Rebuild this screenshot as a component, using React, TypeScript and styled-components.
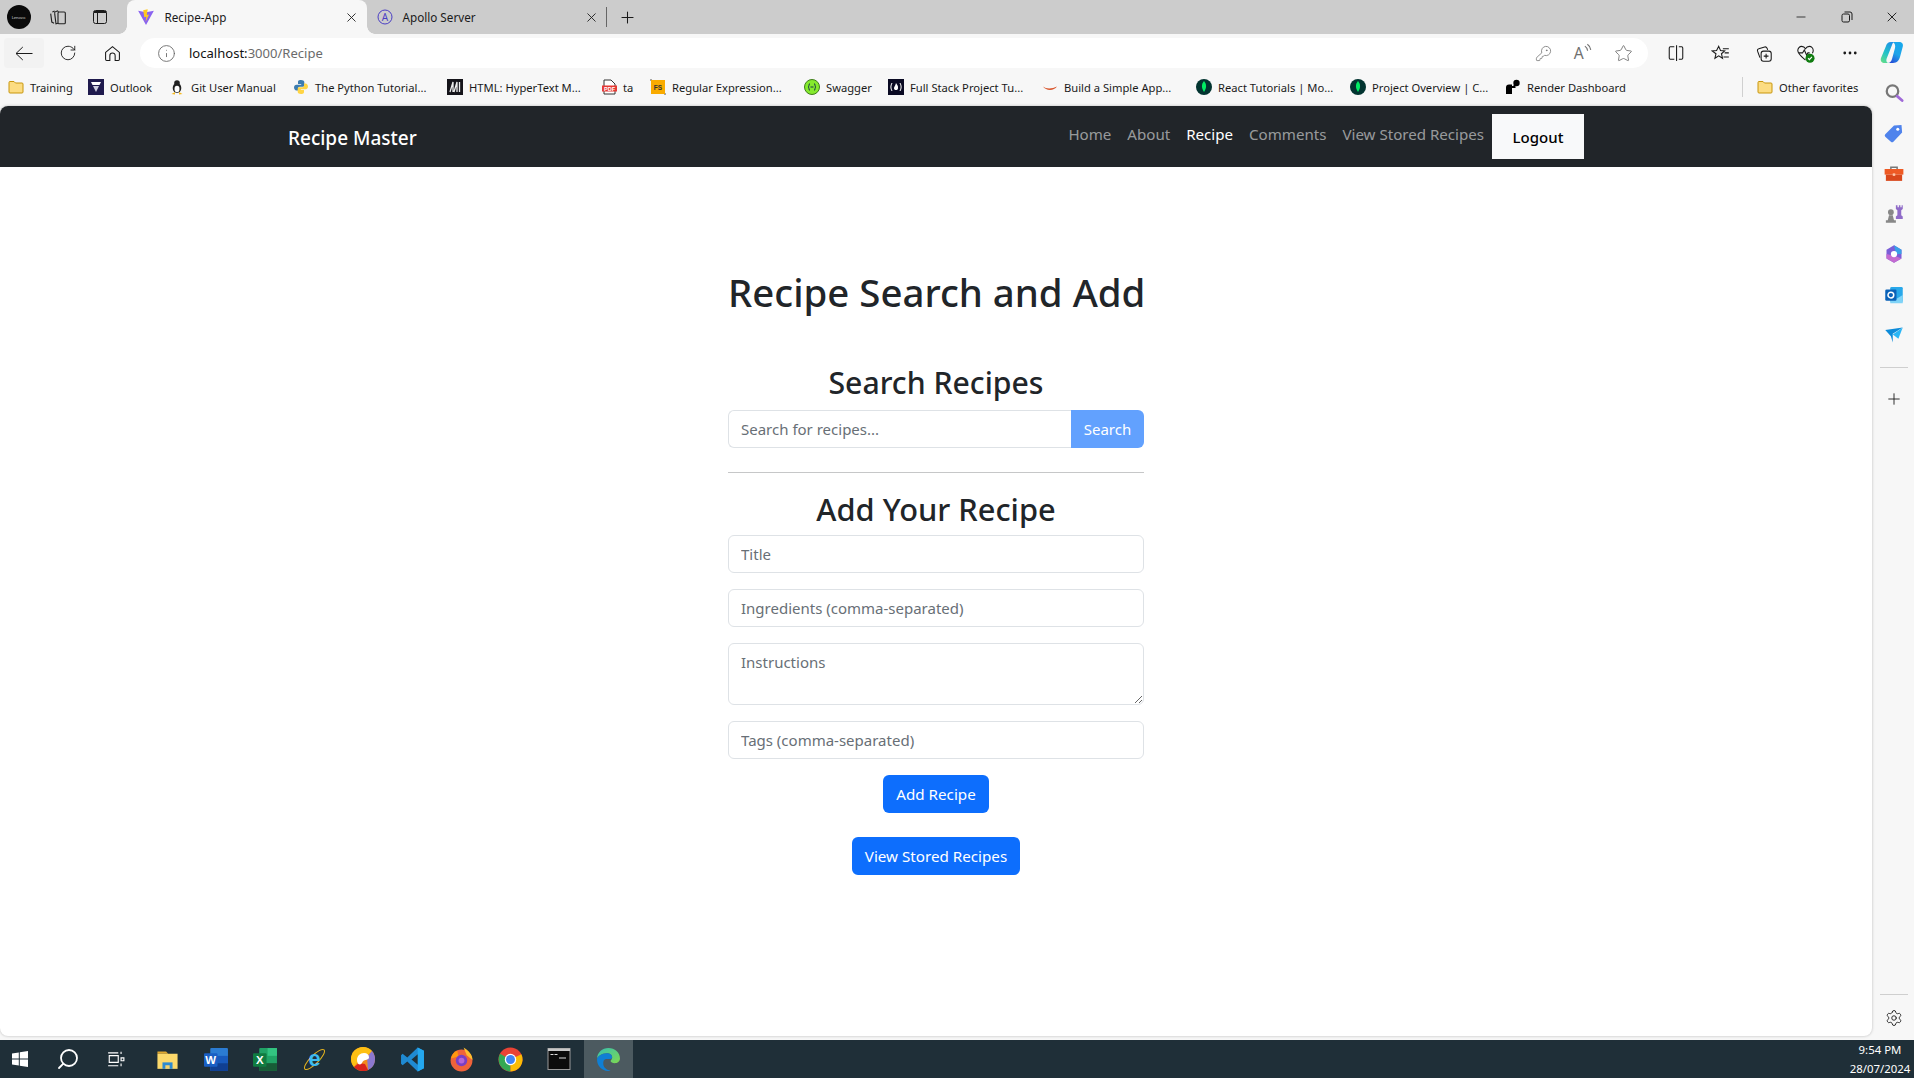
import React from "react";
import styled, { createGlobalStyle } from "styled-components";
import { RotateCw, Info, KeyRound, Star, X, Plus, Minus, MoreHorizontal, Settings, Search as SearchIcon } from "lucide-react";

const Global = createGlobalStyle`
  html, body { margin: 0; padding: 0; height: 100%; overflow: hidden; }
  * { box-sizing: border-box; }
  body { font-family: "Noto Sans", "Open Sans", "Liberation Sans", sans-serif; color: #212529; }
`;

const Screen = styled.div`
  width: 1914px; height: 1078px; display: flex; flex-direction: column; background: #f7f7f7;
`;

/* ---------- tab strip ---------- */
const TabStrip = styled.div`
  height: 34px; flex: none; background: #ccc; display: flex; align-items: stretch; color: #1a1a1a;
`;
const StripButton = styled.div<{ $w: number }>`
  width: ${p => p.$w}px; flex: none; display: flex; align-items: center; justify-content: center;
`;
const ProfileDot = styled.div`
  width: 24px; height: 24px; border-radius: 50%; background: #0a0a0a; flex: none; color: #ddd; font-size: 4px;
  display: flex; align-items: center; justify-content: center;
`;
const Tab = styled.div<{ $active?: boolean }>`
  position: relative; width: 240px; flex: none; display: flex; align-items: center; padding: 0 8px 0 10px; gap: 9.5px;
  font-size: 11.7px; white-space: nowrap;
  background: ${p => (p.$active ? "#f7f7f7" : "transparent")};
  border-radius: ${p => (p.$active ? "8px 8px 0 0" : "0")};
  ${p => p.$active ? `
    &::before, &::after { content: ""; position: absolute; bottom: 0; width: 8px; height: 8px; }
    &::before { left: -8px; background: radial-gradient(circle at 0 0, #ccc 7.5px, #f7f7f7 8px); }
    &::after { right: -8px; background: radial-gradient(circle at 100% 0, #ccc 7.5px, #f7f7f7 8px); }
  ` : ""}
`;
const TabTitle = styled.span` flex: 1; `;
const TabSep = styled.div` width: 1px; height: 20px; background: #666; align-self: center; margin: 0 0 0 -1px; `;
const StripSpacer = styled.div` flex: 1; `;

/* ---------- toolbar ---------- */
const Toolbar = styled.div`
  height: 34px; flex: none; display: flex; align-items: flex-end; background: #f7f7f7;
`;
const ToolSlot = styled.div<{ $w: number; $hover?: boolean }>`
  width: ${p => p.$w}px; height: 30px; flex: none; display: flex; align-items: center; justify-content: center; color: #1a1a1a;
  background: ${p => (p.$hover ? "#f2f2f2" : "transparent")}; border-radius: 4px;
`;
const AddressBar = styled.div`
  width: 1508px; height: 30px; flex: none; background: #fff; border-radius: 15px; display: flex; align-items: center;
  padding-left: 17px; font-size: 13.05px; white-space: nowrap;
`;
const UrlHost = styled.span` color: #111; margin-left: 13px; `;
const UrlPath = styled.span` color: #6b6b6b; flex: 1; `;
const AddressIcons = styled.div`
  display: flex; align-items: center; color: #707070; padding-right: 5px;
`;
const AddressIcon = styled.div`
  width: 40px; display: flex; justify-content: center; align-items: center;
`;

/* ---------- body ---------- */
const Body = styled.div` flex: 1; min-height: 0; display: flex; `;
const Left = styled.div` width: 1872px; flex: none; display: flex; flex-direction: column; padding-bottom: 4px; `;
const Bookmarks = styled.div`
  height: 38px; flex: none; display: flex; align-items: center; padding-left: 8px; font-size: 11.2px; color: #1a1a1a; white-space: nowrap;
`;
const Bookmark = styled.div<{ $w: number }>`
  width: ${p => p.$w}px; flex: none; display: flex; align-items: center; gap: 6px;
`;
const BookmarkDivider = styled.div` width: 1px; height: 20px; background: #d0d0d0; margin-right: 14px; flex: none; `;
const BmIcon = styled.span`
  width: 16px; height: 16px; flex: none; display: flex; align-items: center; justify-content: center;
`;

const Page = styled.div`
  flex: 1; min-height: 0; background: #fff; display: flex; flex-direction: column; border-radius: 8px;
  box-shadow: 0 0 3px rgba(0,0,0,.25);
`;
const Navbar = styled.nav`
  height: 61px; flex: none; background: #212529; border-radius: 8px 8px 0 0; padding: 0 288px;
  display: flex; align-items: center; justify-content: space-between;
`;
const Brand = styled.div` color: #fff; font-size: 19px; font-weight: 500; margin-top: 2px; white-space: nowrap; `;
const NavLinks = styled.div` display: flex; align-items: center; `;
const NavLink = styled.a<{ $active?: boolean }>`
  color: ${p => (p.$active ? "#fff" : "rgba(255,255,255,.55)")}; font-size: 15.1px; padding: 0 8px; margin-bottom: 5px; white-space: nowrap;
`;
const LogoutButton = styled.button`
  width: 92px; height: 45px; border: 0; background: #f8f9fa; color: #000; font: 500 15px "Noto Sans", sans-serif;
`;
const Content = styled.main`
  width: 416px; margin: 0 auto; padding-top: 101px; display: flex; flex-direction: column; align-items: stretch;
`;
const Title = styled.h1`
  margin: 0 0 48px; font-size: 38.4px; line-height: 48px; font-weight: 500; text-align: center; white-space: nowrap; color: #212529;
`;
const Heading = styled.h2<{ $mb: number; $size: number }>`
  margin: 0 0 ${p => p.$mb}px; font-size: ${p => p.$size}px; line-height: 38px; font-weight: 500; text-align: center; white-space: nowrap; color: #212529;
`;
const SearchRow = styled.div` display: flex; height: 38px; `;
const fieldCss = `
  border: 1px solid #dee2e6; background: #fff; font: 400 15px/24px "Noto Sans", sans-serif; color: #212529; padding: 6px 12px; outline: none;
  &::placeholder { color: #686f76; opacity: 1; }
`;
const SearchInput = styled.input`
  ${fieldCss}
  flex: 1; min-width: 0; border-radius: 6px 0 0 6px; border-right: 0;
`;
const SearchButton = styled.button`
  width: 73px; flex: none; border: 0; background: #62a1fe; color: #fff; font: 400 15px "Noto Sans", sans-serif; border-radius: 0 6px 6px 0; padding: 0;
`;
const Rule = styled.hr` width: 100%; border: 0; border-top: 1px solid #c6c7c8; margin: 24px 0 17px; `;
const Field = styled.input`
  ${fieldCss}
  display: block; width: 100%; height: 38px; border-radius: 6px; margin-bottom: 16px;
`;
const TextArea = styled.textarea`
  ${fieldCss}
  display: block; width: 100%; height: 62px; border-radius: 6px; margin-bottom: 16px;
`;
const PrimaryButton = styled.button<{ $w: number; $mb?: number }>`
  width: ${p => p.$w}px; height: 38px; align-self: center; border: 0; border-radius: 6px; background: #0d6efd; color: #fff; padding: 0;
  font: 400 15.2px "Noto Sans", sans-serif; white-space: nowrap; margin-bottom: ${p => p.$mb ?? 0}px;
`;

/* ---------- sidebar ---------- */
const Sidebar = styled.aside`
  flex: 1; display: flex; flex-direction: column; align-items: center; padding: 5px 0 0 1px; color: #1a1a1a;
`;
const SideSlot = styled.div`
  width: 100%; height: 40.3px; flex: none; display: flex; align-items: center; justify-content: center;
`;
const SideRule = styled.div` width: 28px; height: 1px; background: #cfcfcf; flex: none; margin: 12px 0 11px; `;
const SideSpacer = styled.div` flex: 1; `;
const SideRuleBottom = styled(SideRule)` margin: 0 0 3px; `;
const SideFooter = styled.div` height: 40px; flex: none; display: flex; align-items: center; justify-content: center; margin-bottom: 2px; `;

/* ---------- taskbar ---------- */
const Taskbar = styled.footer`
  height: 38px; flex: none; background: #1f2f38; display: flex; align-items: stretch; color: #fff;
`;
const TaskSlot = styled.div<{ $w?: number; $active?: boolean }>`
  width: ${p => p.$w ?? 49}px; flex: none; display: flex; align-items: center; justify-content: center;
  background: ${p => (p.$active ? "#4c5a60" : "transparent")};
`;
const TaskApps = styled.div` display: flex; margin-left: 6.5px; `;
const TaskSpacer = styled.div` flex: 1; `;
const Clock = styled.div`
  width: 62px; margin-right: 3px; text-align: center; font-size: 11.4px; line-height: 19px; white-space: nowrap;
`;
const MirroredSearch = styled(SearchIcon)` transform: scaleX(-1); `;

/* ---------- drawn icons ---------- */
const Svg: React.FC<{ s?: number; children: React.ReactNode }> = ({ s = 16, children }) => (
  <svg width={s} height={s} viewBox="0 0 16 16" fill="none">{children}</svg>
);
const Folder = () => (
  <Svg><path d="M1 3.500A1 1 0 0 1 2 2.500h4l1.500 1.500H14a1 1 0 0 1 1 1v8a1 1 0 0 1-1 1H2a1 1 0 0 1-1-1z" fill="#fcdc82" stroke="#c8960c" /></Svg>
);
const ViteLogo = () => (
  <Svg s={18}><path d="M1 2.500l7 1.300 7-1.300-7 12.500z" fill="#8a63f0" /><path d="M5.500 2l4-.8-.8 5 2-.5-3 6.500.6-4.500-1.800.5z" fill="#ffc91f" /></Svg>
);
const ApolloLogo = () => (
  <svg width="16" height="16" viewBox="0 0 16 16" fill="none">
    <circle cx="8" cy="8" r="7" stroke="#4b3fc4" strokeWidth="1" />
    <text x="8" y="11.500" textAnchor="middle" fontSize="10" fill="#4b3fc4" fontFamily="Noto Sans">A</text>
  </svg>
);
const Tabs2 = () => (
  <Svg s={18}><path d="M3 3.500l2-.8M1.500 5l1 7.500 2 1" stroke="#222" /><path d="M4.500 4l3-1.500 1 1M5 4.500l1.200 9.500 1.800-.5" stroke="#222" /><rect x="8" y="3.500" width="6.500" height="10.500" rx="1" stroke="#222" /></Svg>
);
const PanelIcon = () => (
  <Svg><rect x="1.500" y="1.500" width="13" height="13" rx="2" stroke="#1a1a1a" /><path d="M2 3h12" stroke="#1a1a1a" strokeWidth="2" /><path d="M5.500 3v11" stroke="#1a1a1a" /></Svg>
);
const RestoreIcon = () => (
  <svg width="12" height="12" viewBox="0 0 12 12" fill="none"><rect x="1" y="3" width="7.500" height="8" rx="1.500" stroke="#1a1a1a" /><path d="M3.500 1H9a2 2 0 0 1 2 2v6" stroke="#1a1a1a" /></svg>
);
const BackArrow = () => (
  <svg width="18" height="15" viewBox="0 0 18 15" fill="none"><path d="M1 7.500h16.500M7.800 1L1 7.500 7.800 14" stroke="#1a1a1a" /></svg>
);
const HomeIcon = () => (
  <svg width="17" height="17" viewBox="0 0 16 16" fill="none"><path d="M1.500 7L8 1.500 14.500 7v6.500a1 1 0 0 1-1 1H10.500V10a2.500 2.500 0 0 0-5 0v4.500h-3a1 1 0 0 1-1-1z" stroke="#1a1a1a" /></svg>
);
const Outlook = () => <Svg><rect width="16" height="16" fill="#1f1a4d" /><path d="M3 3h10l-1.500 3h-7z" fill="#fff" /><path d="M5 7h6l-3 6z" fill="#cfcfe0" /></Svg>;
const Tux = () => <Svg><ellipse cx="8" cy="9" rx="4.300" ry="5" fill="#222" /><circle cx="8" cy="4" r="2.800" fill="#222" /><ellipse cx="8" cy="10" rx="2.500" ry="3.300" fill="#fff" /><path d="M2.500 15l3.500-2v2.500zM13.500 15l-3.500-2v2.500z" fill="#f5b81e" /></Svg>;
const PythonLogo = () => <Svg><path d="M8 1C5 1 5 2.500 5 3v2h3.200v.7H3.500C2 5.700 1 7 1 8.500s1 3 2.500 3H5V9.500c0-1 .8-1.800 1.800-1.800h3c1 0 1.500-.7 1.500-1.500V3c0-1.200-1.500-2-3.300-2z" fill="#3d7cb0" /><path d="M8 15c3 0 3-1.500 3-2v-2H7.800v-.7h4.700c1.500 0 2.500-1.300 2.500-2.800s-1-3-2.500-3H11v2c0 1-.8 1.800-1.800 1.800h-3c-1 0-1.500.7-1.500 1.500V13c0 1.200 1.500 2 3.300 2z" fill="#ffd545" /></Svg>;
const Mdn = () => <Svg><rect width="16" height="16" fill="#15141a" /><path d="M3 13L6 3v10M7 13L10 3v10M12.500 3v10" stroke="#eee" strokeWidth="1.300" /></Svg>;
const Pdf = () => (
  <svg width="15" height="16" viewBox="0 0 15 16" fill="none">
    <path d="M2 1h7l4 4v10H2z" fill="#fff" stroke="#333" />
    <rect x="0" y="6.500" width="15" height="6" fill="#e53935" />
    <text x="7.500" y="11.500" textAnchor="middle" fontSize="5.500" fontWeight="700" fill="#fff" fontFamily="Liberation Sans">PDF</text>
  </svg>
);
const Fs = () => (
  <svg width="16" height="16" viewBox="0 0 16 16" fill="none">
    <path d="M0 1h2M14 15h2" stroke="#555" />
    <rect x="1" y="1" width="14" height="14" fill="#f9ab00" />
    <text x="8" y="10.500" textAnchor="middle" fontSize="6.500" fontWeight="700" fill="#333" fontFamily="Liberation Sans">FS</text>
  </svg>
);
const Swagger = () => <Svg><circle cx="8" cy="8" r="7.500" fill="#85ea2d" stroke="#3f7d1c" /><path d="M6 4.500C4.500 4.500 5.500 8 4 8c1.500 0 .5 3.500 2 3.500M10 4.500C11.500 4.500 10.500 8 12 8c-1.500 0-.5 3.500-2 3.500M6.500 8h3" stroke="#173647" /></Svg>;
const FullStack = () => <Svg><rect width="16" height="16" fill="#0a0a23" /><path d="M4 4C2.500 6.500 2.500 9.500 4 12M12 4c1.500 2.500 1.500 5.500 0 8" stroke="#fff" /><path d="M8 4c1 2 2.500 3 2 5.500-.3 1-1 1.500-2 1.500s-1.700-.5-2-1.500C5.800 8 7.500 6.500 8 4z" fill="#fff" /></Svg>;
const Swoosh = () => <Svg><path d="M1 7.500c3 2.500 9 2.500 14 0-3 4.500-11 4.500-14 0z" fill="#d9552c" /></Svg>;
const Mongo = () => <Svg><circle cx="8" cy="8" r="8" fill="#023430" /><path d="M8 2c2.500 3 3 6.500 0 11-3-4.500-2.500-8 0-11z" fill="#00ed64" /></Svg>;
const RenderLogo = () => <Svg><path d="M1 15V8.500A3 3 0 0 1 4 5.500h3v9.500z" fill="#000" /><circle cx="11.500" cy="4" r="3.200" fill="#000" /><path d="M7 8h2.500V6" stroke="#000" strokeWidth="2" /></Svg>;
const ReadAloud = () => (
  <Svg s={20}><text x="0.500" y="13" fontSize="12.500" fill="#707070" fontFamily="Noto Sans">A</text><path d="M9.500 2.500c1.300.8 2 2.200 2.200 3.700M11.500 1c1.500 1 2.500 2.800 2.700 4.500" stroke="#707070" strokeWidth=".9" /></Svg>
);
const Split = () => <Svg s={18}><path d="M6.500 2.500H3a1 1 0 0 0-1 1v9a1 1 0 0 0 1 1h3.500M8.500 1v14M10.500 2.500H13a1 1 0 0 1 1 1v9a1 1 0 0 1-1 1h-2.500" stroke="#1a1a1a" strokeWidth=".95" /></Svg>;
const FavList = () => <Svg s={19}><path d="M6.500 2l1.500 3.500 3.500.3-2.700 2.400.9 3.800-3.200-2-3.200 2 .9-3.800L1 5.800l3.700-.3zM10 4h5M11.500 7.500H15M10.500 11H15" stroke="#1a1a1a" strokeWidth=".9" /></Svg>;
const Collections = () => <Svg s={19}><rect x="6" y="6" width="8.500" height="8.500" rx="2" stroke="#1a1a1a" strokeWidth=".9" /><path d="M10.200 8.200v4M8.200 10.200h4M5 11.500L3 6c-.3-1 .2-1.800 1-2l5-1.500c.8-.2 1.600.2 2 1L11.500 5" stroke="#1a1a1a" strokeWidth=".9" /></Svg>;
const Health = () => (
  <Svg s={19}><path d="M8 13.500C5 11 1.500 8.500 1.500 5.500 1.500 3.500 3 2 4.800 2 6.200 2 7.300 2.800 8 4c.7-1.200 1.800-2 3.200-2 1.800 0 3.300 1.500 3.300 3.500 0 .8-.3 1.600-.7 2.300M2.500 7.500h3l1.500-2.500 2 4.500 1-2h1.500" stroke="#1a1a1a" strokeWidth=".9" /><circle cx="11.800" cy="12" r="3.800" fill="#107c10" /><path d="M10.200 12l1.100 1.100 2.100-2.200" stroke="#fff" /></Svg>
);
const Copilot = () => (
  <svg width="26" height="26" viewBox="0 0 26 26" fill="none">
    <defs>
      <linearGradient id="cpa" x1="0.8" y1="0" x2="0.3" y2="1"><stop offset="0" stopColor="#16a8ec" /><stop offset=".55" stopColor="#1fa4e8" /><stop offset="1" stopColor="#2450d8" /></linearGradient>
      <linearGradient id="cpb" x1="0.7" y1="0" x2="0.2" y2="1"><stop offset="0" stopColor="#1f8fe8" /><stop offset=".55" stopColor="#22c3c8" /><stop offset="1" stopColor="#5fdc8c" /></linearGradient>
    </defs>
    <path d="M14 2h6c3 0 4.500 2 3.800 4.500L21 17c-.8 3-3 6-7 6H9c2 0 3.500-2 4-4l3-11c.6-2.500 0-4.500-2-6z" fill="url(#cpa)" />
    <path d="M12 2C9 2 7.500 4 7 6L2 18c-1 3 1 5 3.500 5H10c-2.500 0-3-2-2.500-4L13 5c.4-1.500 1-3 3-3z" fill="url(#cpb)" />
  </svg>
);
const SearchSide = () => <Svg s={20}><circle cx="6.800" cy="6.500" r="4.600" stroke="#777" strokeWidth="1.800" /><path d="M10.500 10.500l4 3.500" stroke="#a06ad8" strokeWidth="2.200" strokeLinecap="round" /></Svg>;
const TagSide = () => <Svg s={20}><path d="M1 9l7-7 6-.5.5 6-7 7.500a1.500 1.500 0 0 1-2 0L1 11a1.500 1.500 0 0 1 0-2z" fill="#4f83ec" /><circle cx="11" cy="5" r="1.200" fill="#fff" /></Svg>;
const ToolboxSide = () => <Svg s={20}><path d="M5.500 4V2.500h5V4" stroke="#777" strokeWidth="1.200" /><rect x="0.500" y="4" width="15" height="4.500" fill="#ee5a24" /><rect x="1.500" y="8.500" width="13" height="5" fill="#d9481c" /><rect x="7" y="7.500" width="2" height="2" fill="#ffc7a8" /></Svg>;
const ChessSide = () => <Svg s={20}><circle cx="5.500" cy="6.500" r="2.300" fill="#888" /><path d="M4 9h3l1 4H3zM1.500 13h8v2h-8z" fill="#888" /><path d="M9.500 1h1.300v1.500h1.100V1h1.200v1.500h1V1H15v3l-1.200 1v4l1.200 1v2H9.500v-2l1.200-1V5L9.500 4z" fill="#8f6bc8" /></Svg>;
const M365Side = () => (
  <Svg s={20}><path d="M8 1l6 3.500v7L8 15l-6-3.500v-7z" fill="#7b5fd8" /><path d="M8 1l6 3.500v3.500H9.500z" fill="#3aa0e8" /><path d="M2 8v3.500L8 15l6-3.500-4-1.500z" fill="#c46bd0" /><circle cx="8" cy="8" r="2.500" fill="#fff" /></Svg>
);
const OutlookSide = () => (
  <Svg s={20}><rect x="5" y="1.500" width="10" height="12" rx="1" fill="#28a8ea" /><path d="M5 8l5 3 5-3v6.500H5z" fill="#7fd3f7" /><rect x="1" y="3.500" width="9" height="9" rx="1" fill="#0a62b8" /><circle cx="5.500" cy="8" r="2.300" stroke="#fff" strokeWidth="1.200" /></Svg>
);
const SendSide = () => <Svg s={20}><path d="M1 4l14-2-8 5 0 7-1.500-5z" fill="#0d8bd9" /><path d="M15 2L7 7.500 11.500 11z" fill="#29b6f6" /></Svg>;
const WinLogo = () => <Svg><path d="M0 2.500l6.800-1V7.600H0zM7.800 1.300L16 0v7.600H7.800zM0 8.500h6.800v6L0 13.500zM7.800 8.500H16V16l-8.200-1.200z" fill="#fff" /></Svg>;
const TaskView = () => <Svg s={18}><path d="M1 2.500h9M1 14h9M2 5h8v6H2zM12.500 1.500v2M12.500 7h2.500v2.500h-2.500zM12.500 12v2.500" stroke="#fff" /></Svg>;
const Explorer = () => <Svg s={23}><path d="M1 2.500h6l1.500 1.500H1z" fill="#e0a82e" /><rect x="1" y="4" width="14" height="10.500" fill="#fcd96b" /><path d="M4.500 14.500V10h7v4.500z" fill="#2d8ad0" /><rect x="6.500" y="12" width="3" height="2.500" fill="#f5d36b" /></Svg>;
const Word = () => (
  <svg width="25" height="25" viewBox="0 0 24 24" fill="none">
    <rect x="6" y="1" width="17" height="22" rx="1" fill="#2b7cd3" /><rect x="6" y="8.500" width="17" height="7" fill="#185abd" /><rect x="6" y="15.500" width="17" height="7.500" fill="#103f91" />
    <rect x="0" y="6" width="13" height="13" rx="1" fill="#1a5fc4" />
    <text x="6.500" y="16.500" textAnchor="middle" fontSize="11" fontWeight="700" fill="#fff" fontFamily="Liberation Sans">W</text>
  </svg>
);
const Excel = () => (
  <svg width="25" height="25" viewBox="0 0 24 24" fill="none">
    <rect x="6" y="1" width="17" height="22" rx="1" fill="#21a366" /><rect x="14" y="1" width="9" height="7.500" fill="#33c481" /><rect x="6" y="15.500" width="17" height="7.500" fill="#185c37" />
    <rect x="0" y="6" width="13" height="13" rx="1" fill="#107c41" />
    <text x="6.500" y="16.500" textAnchor="middle" fontSize="11" fontWeight="700" fill="#fff" fontFamily="Liberation Sans">X</text>
  </svg>
);
const IeLogo = () => (
  <svg width="25" height="25" viewBox="0 0 24 24" fill="none">
    <ellipse cx="12" cy="12" rx="13" ry="4" transform="rotate(-45 12 12)" stroke="#e2b21f" strokeWidth="1" />
    <text x="12" y="18" textAnchor="middle" fontSize="21" fontWeight="700" fill="#3cbcf0" fontFamily="Liberation Sans">e</text>
  </svg>
);
const Ring = () => (
  <svg width="24" height="24" viewBox="0 0 24 24" fill="none">
    <circle cx="12" cy="12" r="12" fill="#f28a1e" />
    <path d="M12 0A12 12 0 0 0 0 12c0 3 1 5.500 3 8l5-7c1-3 3-6 9-5l4-4A12 12 0 0 0 12 0z" fill="#fdbf14" />
    <path d="M3 20a12 12 0 0 0 9 4c3 0 4-.5 5-1l-3-6-6-1z" fill="#d9241c" />
    <path d="M17 23a12 12 0 0 0 7-11c0-3-1-5-3-8l-5 6z" fill="#8b78cf" />
    <path d="M6 13c0-4 3-7 7-7 3 0 5 1.500 5 4.500 0 2-3 2-5 3s-2 4-4 4-3-2-3-4.500z" fill="#fff" />
  </svg>
);
const VsCode = () => (
  <svg width="25" height="25" viewBox="0 0 24 24" fill="none">
    <path d="M17 .5l6 3v17l-6 3-10-9.500-4.500 3.500L1 16V8l1.500-1.500L7 10z" fill="#1f8ad2" />
    <path d="M17 .5l6 3v17l-6 3zM17 7l-6 5 6 5z" fill="#24a8ef" fillRule="evenodd" />
    <path d="M17 7l-6 5 6 5z" fill="#1f2f38" />
  </svg>
);
const Firefox = () => (
  <svg width="25" height="25" viewBox="0 0 24 24" fill="none">
    <circle cx="12" cy="13" r="10.500" fill="#f0633a" /><path d="M14 .5c5 3 8.500 7 8.500 12L17 8z" fill="#ffbd2e" /><path d="M2 11C3 6 6 4 8 3.500L9 9z" fill="#ff980e" /><circle cx="12" cy="13" r="5.500" fill="#7a3fc4" /><circle cx="12" cy="13" r="2.800" fill="#b565d8" />
  </svg>
);
const Chrome = () => (
  <svg width="25" height="25" viewBox="0 0 24 24" fill="none">
    <circle cx="12" cy="12" r="11.500" fill="#ea4335" /><path d="M12 12L2 6.500A11.500 11.500 0 0 0 12 23.500z" fill="#34a853" /><path d="M12 12l10.400-5A11.500 11.500 0 0 1 12 23.500z" fill="#fbbc05" /><circle cx="12" cy="12" r="5.500" fill="#fff" /><circle cx="12" cy="12" r="4.300" fill="#4285f4" />
  </svg>
);
const Terminal = () => <svg width="24" height="24" viewBox="0 0 24 24" fill="none"><rect x="1" y="1.500" width="22" height="21" fill="#0c0c0c" stroke="#9a9a9a" /><rect x="1" y="1.500" width="22" height="2.500" fill="#c8c8c8" /><path d="M3.500 7.500h3M7.500 7.500h3M12 11h7" stroke="#ddd" /></svg>;
const Edge = () => (
  <svg width="25" height="25" viewBox="0 0 24 24" fill="none">
    <defs><linearGradient id="eg" x1="0" y1="0" x2="1" y2="1"><stop offset="0" stopColor="#35c1b1" /><stop offset="1" stopColor="#7fd84f" /></linearGradient></defs>
    <path d="M1 12C1 5 6 1 12 1s11 4.500 11 10c0 3-2.500 4.500-5 4.500-2 0-4-.8-4-2 0-1 1.500-1.500 1.500-3.500C15.500 7 13 6 10.500 6 5.500 6 1 9 1 12z" fill="url(#eg)" />
    <path d="M1 12c0-3 4.500-6 9.500-6 2.500 0 5 1 5 4 0 1-1 1.500-4.500 1.500S7 13 7 16s2.500 6 7 6.500c-1 .5-1.500.5-2.500.5C6 23 1 18.500 1 12z" fill="#0f7fd4" />
  </svg>
);

const bookmarks: { w: number; label: string; icon: React.ReactNode }[] = [
  { w: 80, label: "Training", icon: <Folder /> },
  { w: 81, label: "Outlook", icon: <Outlook /> },
  { w: 124, label: "Git User Manual", icon: <Tux /> },
  { w: 154, label: "The Python Tutorial...", icon: <PythonLogo /> },
  { w: 154, label: "HTML: HyperText M...", icon: <Mdn /> },
  { w: 49, label: "ta", icon: <Pdf /> },
  { w: 154, label: "Regular Expression...", icon: <Fs /> },
  { w: 84, label: "Swagger", icon: <Swagger /> },
  { w: 154, label: "Full Stack Project Tu...", icon: <FullStack /> },
  { w: 154, label: "Build a Simple App...", icon: <Swoosh /> },
  { w: 154, label: "React Tutorials | Mo...", icon: <Mongo /> },
  { w: 155, label: "Project Overview | C...", icon: <Mongo /> },
  { w: 237, label: "Render Dashboard", icon: <RenderLogo /> },
];

const sideIcons = [<SearchSide />, <TagSide />, <ToolboxSide />, <ChessSide />, <M365Side />, <OutlookSide />, <SendSide />];
const taskApps = [<Explorer />, <Word />, <Excel />, <IeLogo />, <Ring />, <VsCode />, <Firefox />, <Chrome />, <Terminal />];

export default function App() {
  return (
    <Screen>
      <Global />
      <TabStrip>
        <StripButton $w={37}><ProfileDot>Lenovo</ProfileDot></StripButton>
        <StripButton $w={42}><Tabs2 /></StripButton>
        <StripButton $w={42}><PanelIcon /></StripButton>
        <StripButton $w={6} />
        <Tab $active>
          <ViteLogo />
          <TabTitle>Recipe-App</TabTitle>
          <X size={15} strokeWidth={1.4} />
        </Tab>
        <Tab>
          <ApolloLogo />
          <TabTitle>Apollo Server</TabTitle>
          <X size={15} strokeWidth={1.4} />
        </Tab>
        <TabSep />
        <StripButton $w={40}><Plus size={19} strokeWidth={1.3} /></StripButton>
        <StripSpacer />
        <StripButton $w={46}><Minus size={14} strokeWidth={1.4} /></StripButton>
        <StripButton $w={46}><RestoreIcon /></StripButton>
        <StripButton $w={44}><X size={16} strokeWidth={1.4} /></StripButton>
      </TabStrip>
      <Toolbar>
        <ToolSlot $w={4} />
        <ToolSlot $w={40} $hover><BackArrow /></ToolSlot>
        <ToolSlot $w={2} />
        <ToolSlot $w={44}><RotateCw size={18} strokeWidth={1.2} /></ToolSlot>
        <ToolSlot $w={44}><HomeIcon /></ToolSlot>
        <ToolSlot $w={6} />
        <AddressBar>
          <Info size={19} strokeWidth={1.1} color="#666" />
          <UrlHost>localhost:</UrlHost>
          <UrlPath>3000/Recipe</UrlPath>
          <AddressIcons>
            <AddressIcon><KeyRound size={17} strokeWidth={1.1} /></AddressIcon>
            <AddressIcon><ReadAloud /></AddressIcon>
            <AddressIcon><Star size={19} strokeWidth={1.1} /></AddressIcon>
          </AddressIcons>
        </AddressBar>
        <ToolSlot $w={7} />
        <ToolSlot $w={42}><Split /></ToolSlot>
        <ToolSlot $w={46}><FavList /></ToolSlot>
        <ToolSlot $w={40}><Collections /></ToolSlot>
        <ToolSlot $w={44}><Health /></ToolSlot>
        <ToolSlot $w={45}><MoreHorizontal size={18} strokeWidth={1.7} /></ToolSlot>
        <ToolSlot $w={40}><Copilot /></ToolSlot>
      </Toolbar>
      <Body>
        <Left>
          <Bookmarks>
            {bookmarks.map(b => (
              <Bookmark key={b.label} $w={b.w}><BmIcon>{b.icon}</BmIcon>{b.label}</Bookmark>
            ))}
            <BookmarkDivider />
            <Bookmark $w={100}><BmIcon><Folder /></BmIcon>Other favorites</Bookmark>
          </Bookmarks>
          <Page>
            <Navbar>
              <Brand>Recipe Master</Brand>
              <NavLinks>
                <NavLink>Home</NavLink>
                <NavLink>About</NavLink>
                <NavLink $active>Recipe</NavLink>
                <NavLink>Comments</NavLink>
                <NavLink>View Stored Recipes</NavLink>
                <LogoutButton>Logout</LogoutButton>
              </NavLinks>
            </Navbar>
            <Content>
              <Title>Recipe Search and Add</Title>
              <Heading $mb={8} $size={30.2}>Search Recipes</Heading>
              <SearchRow>
                <SearchInput placeholder="Search for recipes..." />
                <SearchButton>Search</SearchButton>
              </SearchRow>
              <Rule />
              <Heading $mb={7} $size={30.8}>Add Your Recipe</Heading>
              <Field placeholder="Title" />
              <Field placeholder="Ingredients (comma-separated)" />
              <TextArea placeholder="Instructions" />
              <Field placeholder="Tags (comma-separated)" />
              <PrimaryButton $w={106} $mb={24}>Add Recipe</PrimaryButton>
              <PrimaryButton $w={168}>View Stored Recipes</PrimaryButton>
            </Content>
          </Page>
        </Left>
        <Sidebar>
          {sideIcons.map((icon, i) => <SideSlot key={i}>{icon}</SideSlot>)}
          <SideRule />
          <SideSlot><Plus size={18} strokeWidth={1.2} /></SideSlot>
          <SideSpacer />
          <SideRuleBottom />
          <SideFooter><Settings size={18} strokeWidth={1.2} /></SideFooter>
        </Sidebar>
      </Body>
      <Taskbar>
        <TaskSlot $w={40}><WinLogo /></TaskSlot>
        <TaskSlot $w={56}><MirroredSearch size={24} strokeWidth={1.8} /></TaskSlot>
        <TaskSlot $w={40}><TaskView /></TaskSlot>
        <TaskApps>
          {taskApps.map((a, i) => <TaskSlot key={i}>{a}</TaskSlot>)}
          <TaskSlot $active><Edge /></TaskSlot>
        </TaskApps>
        <TaskSpacer />
        <Clock>9:54 PM<br />28/07/2024</Clock>
      </Taskbar>
    </Screen>
  );
}
